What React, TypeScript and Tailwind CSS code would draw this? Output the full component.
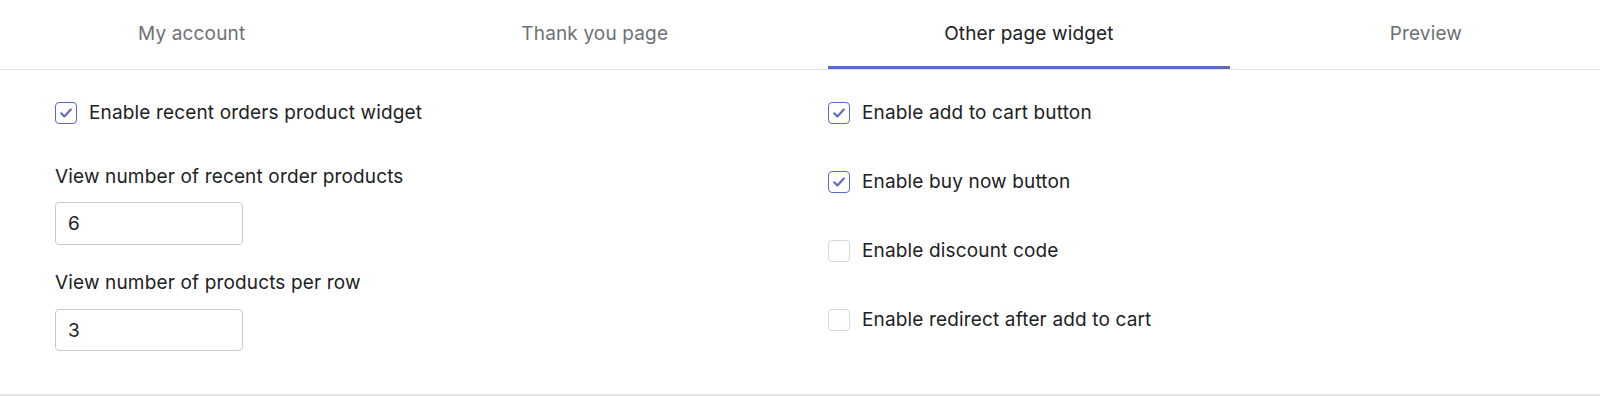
import React from "react";

const tabs = ["My account", "Thank you page", "Other page widget", "Preview"];

function CheckBox({ checked }: { checked: boolean }) {
  return (
    <span
      className={
        checked
          ? "w-[22px] h-[22px] rounded-[4px] border-[1.5px] border-[#5c6ac4] bg-white flex items-center justify-center shrink-0"
          : "w-[22px] h-[22px] rounded-[4px] border-[1.5px] border-[#d3d6da] bg-white flex items-center justify-center shrink-0"
      }
    >
      {checked && (
        <svg width="16" height="16" viewBox="0 0 12 12" fill="none">
          <path
            d="M2.4 6.2l2.4 2.4 4.8-5.2"
            stroke="#5c6ac4"
            strokeWidth="1.6"
            strokeLinecap="round"
            strokeLinejoin="round"
          />
        </svg>
      )}
    </span>
  );
}

function Option({ label, checked }: { label: string; checked: boolean }) {
  return (
    <label className="flex items-center gap-3 h-6">
      <CheckBox checked={checked} />
      <span>{label}</span>
    </label>
  );
}

export default function App() {
  return (
    <div
      className="w-[1600px] h-[396px] bg-white border-b-2 border-[#e4e5e7] text-[19px] tracking-[0.15px] text-[#202223]"
      style={{ fontFamily: "Inter, 'Noto Sans', sans-serif" }}
    >
      <div className="flex h-[70px] border-b border-[#e1e3e5]">
        {tabs.map((t, i) => {
          const active = i === 2;
          return (
            <div key={t} className="flex-auto flex px-[22px]">
              <span
                className={
                  active
                    ? "flex-1 flex items-center justify-center border-b-[3px] border-[#5c6ac4] text-[#202223] pt-[3px]"
                    : "flex-1 flex items-center justify-center border-b-[3px] border-transparent text-[#6d7175] pt-[3px]"
                }
              >
                {t}
              </span>
            </div>
          );
        })}
      </div>

      <div className="grid grid-cols-2 gap-x-14 px-[55px] pt-[31px]">
        <div className="flex flex-col">
          <Option label="Enable recent orders product widget" checked />
          <div className="mt-10 h-6 leading-6">View number of recent order products</div>
          <input
            readOnly
            value="6"
            className="mt-[13px] w-[188px] h-[43px] rounded-[4px] border border-[#c9cccf] px-3 outline-none"
          />
          <div className="mt-[26px] h-6 leading-6">View number of products per row</div>
          <input
            readOnly
            value="3"
            className="mt-[14px] w-[188px] h-[42px] rounded-[4px] border border-[#c9cccf] px-3 outline-none"
          />
        </div>
        <div className="flex flex-col gap-[45px]">
          <Option label="Enable add to cart button" checked />
          <Option label="Enable buy now button" checked />
          <Option label="Enable discount code" checked={false} />
          <Option label="Enable redirect after add to cart" checked={false} />
        </div>
      </div>
    </div>
  );
}
